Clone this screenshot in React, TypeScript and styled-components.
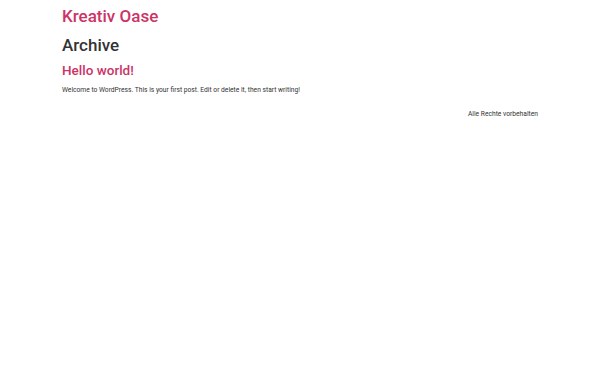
import React from "react";
import styled, { createGlobalStyle } from "styled-components";

const Global = createGlobalStyle`
  html, body { margin: 0; padding: 0; background: #fff; }
  body { font-family: Roboto, "Noto Sans", "Liberation Sans", sans-serif; color: #333; }
  * { box-sizing: border-box; }
`;

const Page = styled.div`
  width: 100%;
  min-height: 375px;
  display: flex;
  flex-direction: column;
  align-items: center;
`;

const Container = styled.div`
  width: 476px;
  display: flex;
  flex-direction: column;
`;

const Header = styled(Container).attrs({ as: "header" })`
  padding-top: 5px;
`;

const SiteTitle = styled.a`
  color: #cc3366;
  font-size: 17px;
  font-weight: 500;
  line-height: 22px;
  text-decoration: none;
`;

const Main = styled(Container).attrs({ as: "main" })`
  padding-top: 7px;
`;

const PageTitle = styled.h1`
  margin: 0;
  font-size: 17px;
  font-weight: 500;
  line-height: 22px;
  color: #333;
`;

const Article = styled.article`
  display: flex;
  flex-direction: column;
  padding-top: 5px;
`;

const PostTitle = styled.a`
  color: #cc3366;
  font-size: 13.5px;
  font-weight: 500;
  line-height: 18px;
  text-decoration: none;
`;

const Excerpt = styled.p`
  margin: 6px 0 0;
  font-size: 6.7px;
  line-height: 10px;
  color: #333;
`;

const Footer = styled(Container).attrs({ as: "footer" })`
  padding-top: 14px;
  align-items: flex-end;
`;

const Copy = styled.p`
  margin: 0;
  font-size: 6.7px;
  line-height: 10px;
  color: #333;
`;

export default function App() {
  return (
    <>
      <Global />
      <Page>
        <Header>
          <SiteTitle href="#">Kreativ Oase</SiteTitle>
        </Header>
        <Main>
          <PageTitle>Archive</PageTitle>
          <Article>
            <PostTitle href="#">Hello world!</PostTitle>
            <Excerpt>
              Welcome to WordPress. This is your first post. Edit or delete it, then start writing!
            </Excerpt>
          </Article>
        </Main>
        <Footer>
          <Copy>Alle Rechte vorbehalten</Copy>
        </Footer>
      </Page>
    </>
  );
}
